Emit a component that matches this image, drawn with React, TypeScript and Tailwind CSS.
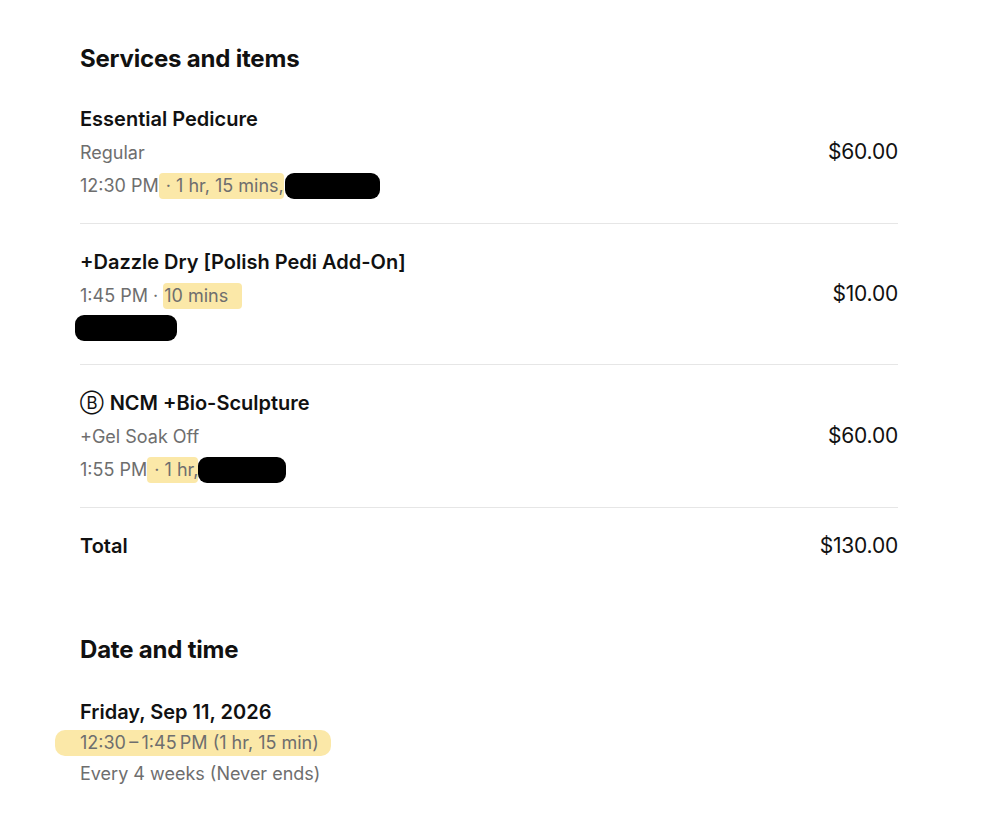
const font = "font-['Inter','Liberation_Sans',sans-serif]";

function Mark({ children, className = "" }: { children: React.ReactNode; className?: string }) {
  return (
    <span className={`inline-block h-[26px] leading-[26px] bg-[#fbe8a8] rounded-[4px] ${className}`}>{children}</span>
  );
}

function Redact({ className = "" }: { className?: string }) {
  return <span className={`inline-block bg-black rounded-[9px] ${className}`} />;
}

function Line({ children, className = "h-[33px]" }: { children: React.ReactNode; className?: string }) {
  return <div className={`flex items-center whitespace-pre ${className}`}>{children}</div>;
}

function Item({
  title,
  price,
  children,
  first,
}: {
  title: React.ReactNode;
  price: string;
  children: React.ReactNode;
  first?: boolean;
}) {
  return (
    <div className={`flex items-center justify-between py-[21px] ${first ? "" : "border-t border-[#e6e6e6]"}`}>
      <div className="flex flex-col">
        <div className="flex items-center h-[34px] text-[20px] font-semibold text-[#111]">{title}</div>
        <div className="text-[18px] text-[#6e6e6e]">{children}</div>
      </div>
      <div className="text-[21px] text-[#111] tracking-[-0.2px]">{price}</div>
    </div>
  );
}

export default function App() {
  return (
    <div className={`min-h-screen bg-white ${font}`}>
      <div className="ml-[80px] w-[818px] pt-[43px]">
        <h2 className="text-[24px] leading-[32px] font-bold text-[#111] tracking-[-0.2px] mb-[6px]">
          Services and items
        </h2>

        <Item title="Essential Pedicure" price="$60.00" first>
          <Line>Regular</Line>
          <Line>
            12:30 PM<Mark className="pl-[2px]"> · 1 hr, 15 mins,</Mark>
            <Redact className="w-[95px] h-[26px] ml-[1px]" />
          </Line>
        </Item>

        <Item title="+Dazzle Dry [Polish Pedi Add-On]" price="$10.00">
          <Line>
            1:45 PM · <Mark className="pr-[14px] pl-[1px]">10 mins</Mark>
          </Line>
          <Line className="h-[31px]">
            <Redact className="w-[102px] h-[26px] -ml-[5px]" />
          </Line>
        </Item>

        <Item
          title={
            <>
              <span className="font-normal text-[17px] leading-none mr-[6px]">Ⓑ</span>NCM +Bio-Sculpture
            </>
          }
          price="$60.00"
        >
          <Line>+Gel Soak Off</Line>
          <Line>
            1:55 PM<Mark className="pl-[2px]"> · 1 hr,</Mark>
            <Redact className="w-[88px] h-[26px]" />
          </Line>
        </Item>

        <div className="flex items-center justify-between border-t border-[#e6e6e6] py-[21px]">
          <div className="h-[34px] flex items-center text-[20px] font-semibold text-[#111]">Total</div>
          <div className="text-[21px] text-[#111] tracking-[-0.2px]">$130.00</div>
        </div>

        <h2 className="mt-[50px] text-[24px] leading-[32px] font-bold text-[#111] tracking-[-0.2px]">
          Date and time
        </h2>
        <div className="mt-[31px] flex flex-col">
          <div className="text-[20px] leading-[30px] font-semibold text-[#111]">Friday, Sep 11, 2026</div>
          <Line className="h-[32px] text-[18px] text-[#6e6e6e]">
            <Mark className="-ml-[25px] pl-[25px] pr-[12px] rounded-[10px]">
              {"12:30\u2009–\u20091:45\u2009PM (1 hr, 15 min)"}
            </Mark>
          </Line>
          <div className="text-[18px] leading-[29px] text-[#6e6e6e]">Every 4 weeks (Never ends)</div>
        </div>
      </div>
    </div>
  );
}
